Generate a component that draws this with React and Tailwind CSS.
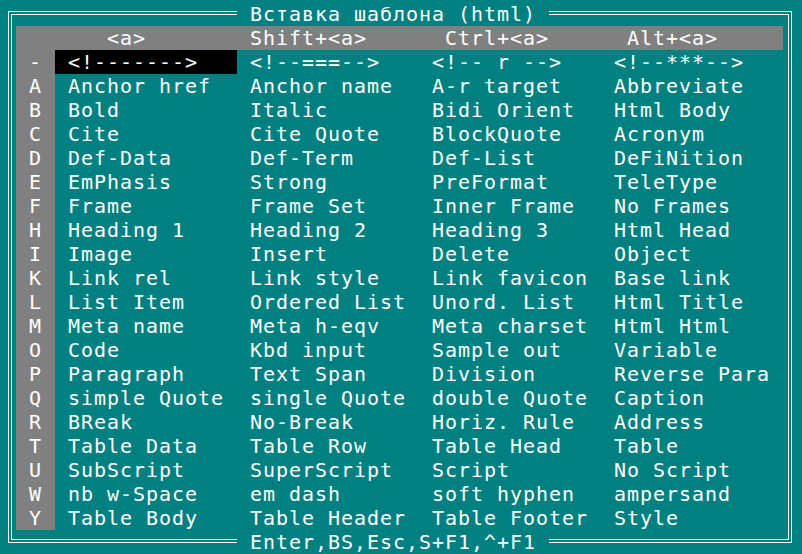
import React from 'react';

const HEAD = [
  { label: '<a>', pad: 'pl-[52px]' },
  { label: 'Shift+<a>', pad: 'pl-[13px]' },
  { label: 'Ctrl+<a>', pad: 'pl-[26px]' },
  { label: 'Alt+<a>', pad: 'pl-[26px]' },
];

const ROWS = [
  ['-', '<!------->', '<!--===-->', '<!-- r -->', '<!--***-->'],
  ['A', 'Anchor href', 'Anchor name', 'A-r target', 'Abbreviate'],
  ['B', 'Bold', 'Italic', 'Bidi Orient', 'Html Body'],
  ['C', 'Cite', 'Cite Quote', 'BlockQuote', 'Acronym'],
  ['D', 'Def-Data', 'Def-Term', 'Def-List', 'DeFiNition'],
  ['E', 'EmPhasis', 'Strong', 'PreFormat', 'TeleType'],
  ['F', 'Frame', 'Frame Set', 'Inner Frame', 'No Frames'],
  ['H', 'Heading 1', 'Heading 2', 'Heading 3', 'Html Head'],
  ['I', 'Image', 'Insert', 'Delete', 'Object'],
  ['K', 'Link rel', 'Link style', 'Link favicon', 'Base link'],
  ['L', 'List Item', 'Ordered List', 'Unord. List', 'Html Title'],
  ['M', 'Meta name', 'Meta h-eqv', 'Meta charset', 'Html Html'],
  ['O', 'Code', 'Kbd input', 'Sample out', 'Variable'],
  ['P', 'Paragraph', 'Text Span', 'Division', 'Reverse Para'],
  ['Q', 'simple Quote', 'single Quote', 'double Quote', 'Caption'],
  ['R', 'BReak', 'No-Break', 'Horiz. Rule', 'Address'],
  ['T', 'Table Data', 'Table Row', 'Table Head', 'Table'],
  ['U', 'SubScript', 'SuperScript', 'Script', 'No Script'],
  ['W', 'nb w-Space', 'em dash', 'soft hyphen', 'ampersand'],
  ['Y', 'Table Body', 'Table Header', 'Table Footer', 'Style'],
];

export default function App() {
  return (
    <div
      className="relative w-[802px] h-[554px] bg-[#008080] text-white text-[20px] leading-[24px] tracking-[0.96px] whitespace-pre overflow-hidden pl-[8px] pt-[11px]"
      style={{ fontFamily: '"DejaVu Sans Mono", "Liberation Mono", monospace' }}
    >
      {/* double frame */}
      <div className="w-[784px] h-[532px] border border-white p-[2px]">
        <div className="w-full h-full border border-white pl-[4px] pr-[5px] pt-[11px] pb-[9px]">
          {/* header bar */}
          <div className="flex h-[24px] bg-[#808080]">
            <div className="w-[39px] shrink-0" />
            {HEAD.map((h, i) => (
              <div key={i} className={`w-[182px] shrink-0 ${h.pad}`}>{h.label}</div>
            ))}
          </div>

          {ROWS.map((r, i) => (
            <div key={i} className="flex h-[24px]">
              <div className="w-[39px] shrink-0 bg-[#808080] text-center">{r[0]}</div>
              {r.slice(1).map((cell, j) => (
                <div
                  key={j}
                  className={
                    i === 0 && j === 0
                      ? 'w-[182px] shrink-0 pl-[13px] bg-black'
                      : 'w-[182px] shrink-0 pl-[13px]'
                  }
                >
                  {cell}
                </div>
              ))}
            </div>
          ))}
        </div>
      </div>

      {/* title over top border */}
      <div className="absolute left-[237px] top-[2px] w-[312px] h-[24px] bg-[#008080] pl-[13px]">
        Вставка шаблона (html)
      </div>
      {/* key hints over bottom border */}
      <div className="absolute left-[237px] top-[530px] w-[312px] h-[24px] bg-[#008080] pl-[13px]">
        Enter,BS,Esc,S+F1,^+F1
      </div>
    </div>
  );
}
